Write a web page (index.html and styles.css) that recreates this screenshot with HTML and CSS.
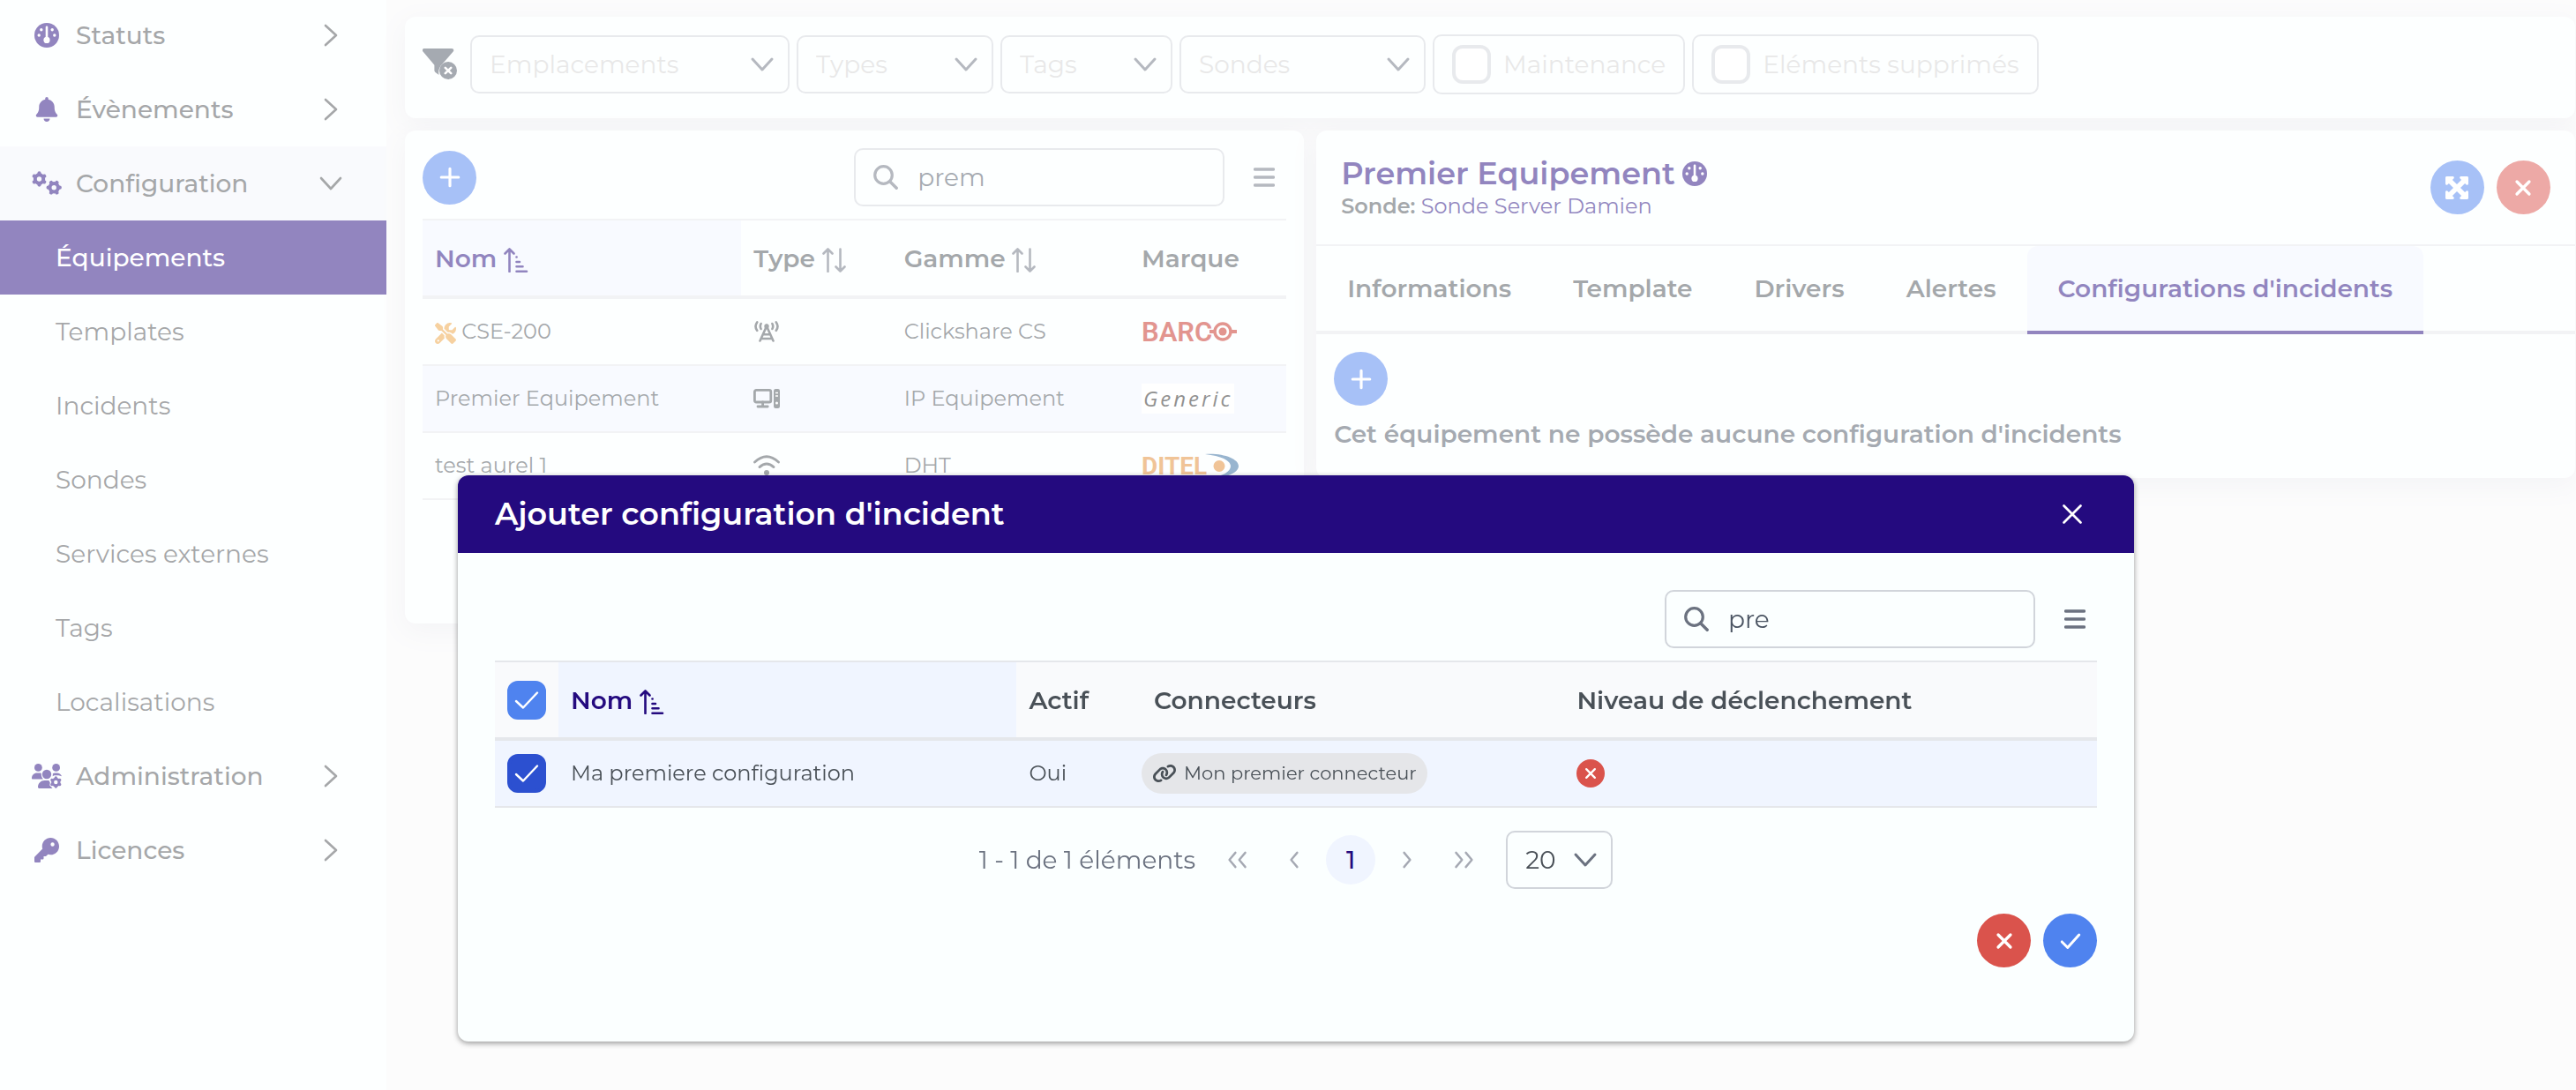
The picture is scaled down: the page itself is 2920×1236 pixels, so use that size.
FILE: index.html
```html
<!DOCTYPE html>
<html lang="fr">
<head>
    <meta charset="UTF-8">
    <meta name="viewport" content="width=device-width, initial-scale=1.0">
    <title>Équipements</title>
    <link rel="stylesheet" href="styles.css">
</head>
<body>

    <!-- Icônes -->
    <svg class="sprite" aria-hidden="true">
        <symbol id="i-gauge" viewBox="0 0 28 28">
            <circle cx="14" cy="14" r="14" fill="currentColor"/>
            <g fill="#fff">
                <circle cx="7.8" cy="7.8" r="1.7"/><circle cx="20.2" cy="7.8" r="1.7"/>
                <circle cx="5.2" cy="14" r="1.7"/><circle cx="22.8" cy="14" r="1.7"/>
                <circle cx="14" cy="19.4" r="3.6"/>
                <rect x="12.7" y="3.5" width="2.6" height="15" rx="1.3"/>
            </g>
        </symbol>
        <symbol id="i-bell" viewBox="0 0 448 512"><path fill="currentColor" d="M224 0c-17.700 0-32 14.300-32 32V51.200C119 66 64 130.600 64 208v18.800c0 47-17.300 92.400-48.500 127.600l-7.400 8.300c-8.400 9.400-10.400 22.900-5.300 34.400S19.400 416 32 416H416c12.600 0 24-7.400 29.200-18.900s3.100-25-5.300-34.400l-7.400-8.300C401.300 319.200 384 273.900 384 226.800V208c0-77.400-55-142-128-156.800V32c0-17.700-14.300-32-32-32zm45.300 493.300c12-12 18.700-28.300 18.700-45.300H224 160c0 17 6.700 33.300 18.700 45.300s28.300 18.700 45.300 18.700s33.300-6.700 45.300-18.700z"/></symbol>
        <symbol id="i-gears" viewBox="0 0 34 28">
            <g fill="none" stroke="currentColor">
                <g transform="translate(8.500 9)">
                    <circle r="4.700" stroke-width="4"/>
                    <path stroke-width="4.200" stroke-linecap="round" d="M0-5.500V-6.600M0 5.500V6.600M4.800-2.800L5.700-3.300M-4.800-2.800L-5.700-3.300M4.800 2.800L5.700 3.300M-4.800 2.800L-5.700 3.300"/>
                </g>
                <g transform="translate(25.200 18.700) rotate(90)">
                    <circle r="4.700" stroke-width="4"/>
                    <path stroke-width="4.200" stroke-linecap="round" d="M0-5.500V-6.600M0 5.500V6.600M4.800-2.800L5.700-3.300M-4.800-2.800L-5.700-3.300M4.800 2.800L5.700 3.300M-4.800 2.800L-5.700 3.300"/>
                </g>
            </g>
        </symbol>
        <symbol id="i-users" viewBox="0 0 34 28">
            <g fill="currentColor">
                <circle cx="7.400" cy="4.400" r="4.400"/><circle cx="27.600" cy="4.400" r="4.400"/>
                <circle cx="17" cy="12" r="5.200"/>
                <path d="M0 16.400C0 13 2.600 10.500 6 10.500H8.800C9.500 10.500 10.200 10.600 10.800 10.900C10.600 13.300 11.200 15.600 12.900 17.500H1.200C.5 17.500 0 17.100 0 16.400Z"/>
                <path d="M23.800 11.300C24.600 10.800 25.600 10.500 26.500 10.500H28.500C31 10.500 33.200 12 34 14.300L30.500 13.200H25.500L23.600 14.300C23.900 13.300 24 12.300 23.800 11.300Z"/>
                <path d="M7 26.600C7 22.300 10.300 19 14.500 19H19.400L20.800 21.500L20.300 24.500L23.500 27.900H8.300C7.600 27.900 7 27.300 7 26.600Z"/>
            </g>
            <g transform="translate(27.300 21)" fill="none" stroke="currentColor">
                <circle r="3.700" stroke-width="3"/>
                <path stroke-width="3.400" stroke-linecap="round" d="M0-4.500V-5M0 4.500V5M4-2.300L4.400-2.500M-4-2.300L-4.400-2.500M4 2.300L4.400 2.500M-4 2.300L-4.400 2.500"/>
            </g>
        </symbol>
        <symbol id="i-key" viewBox="0 0 512 512"><path fill="currentColor" d="M336 352c97.200 0 176-78.800 176-176S433.200 0 336 0S160 78.800 160 176c0 18.700 2.900 36.800 8.300 53.700L7 391c-4.500 4.500-7 10.600-7 17v80c0 13.300 10.700 24 24 24h80c13.300 0 24-10.700 24-24V448h40c13.300 0 24-10.700 24-24V384h40c6.400 0 12.500-2.500 17-7l33.300-33.300c16.900 5.400 35 8.300 53.700 8.300zM376 96a40 40 0 1 1 0 80 40 40 0 1 1 0-80z"/></symbol>
        <symbol id="i-right" viewBox="0 0 28 28"><path d="M8 3L20 14L8 25" fill="none" stroke="currentColor" stroke-width="2.600" stroke-linecap="round" stroke-linejoin="round"/></symbol>
        <symbol id="i-down" viewBox="0 0 28 28"><path d="M3 8L14 20L25 8" fill="none" stroke="currentColor" stroke-width="2.600" stroke-linecap="round" stroke-linejoin="round"/></symbol>
        <symbol id="i-filter" viewBox="0 0 40 36">
            <path fill="currentColor" d="M2 0H33C35 0 36 2 34.700 3.600L22.500 17.500C19 20.500 17.500 25 18.500 30L14.500 27C13.800 26.500 13.400 25.800 13.400 25V18.800L.5 3.600C-.8 2 0 0 2 0Z"/>
            <circle cx="29" cy="25" r="10" fill="currentColor"/>
            <path d="M25.800 21.800L32.200 28.200M32.200 21.800L25.800 28.200" stroke="#fff" stroke-width="2.600" stroke-linecap="round"/>
        </symbol>
        <symbol id="i-plus" viewBox="0 0 28 28"><path d="M14 3.500V24.500M3.500 14H24.500" stroke="currentColor" stroke-width="3.400" stroke-linecap="round"/></symbol>
        <symbol id="i-cross" viewBox="0 0 28 28"><path d="M6.500 6.500L21.500 21.500M21.500 6.500L6.500 21.500" stroke="currentColor" stroke-width="3.600" stroke-linecap="round"/></symbol>
        <symbol id="i-close" viewBox="0 0 28 28"><path d="M4.500 4.500L23.500 23.500M23.500 4.500L4.500 23.500" stroke="currentColor" stroke-width="2.700" stroke-linecap="round"/></symbol>
        <symbol id="i-check" viewBox="0 0 28 28"><path d="M3.500 15L10.500 22L24.500 6.500" fill="none" stroke="currentColor" stroke-width="3.200" stroke-linecap="round" stroke-linejoin="round"/></symbol>
        <symbol id="i-search" viewBox="0 0 28 28"><circle cx="11.500" cy="11.500" r="9.800" fill="none" stroke="currentColor" stroke-width="3.200"/><path d="M18.700 18.700L26.200 26.200" stroke="currentColor" stroke-width="3.400" stroke-linecap="round"/></symbol>
        <symbol id="i-menu" viewBox="0 0 24 22"><path d="M1.500 2H22.500M1.500 11H22.500M1.500 20H22.500" stroke="currentColor" stroke-width="3.400" stroke-linecap="round"/></symbol>
        <symbol id="i-asc" viewBox="0 0 28 28"><g fill="none" stroke="currentColor" stroke-width="2.600" stroke-linecap="round" stroke-linejoin="round"><path d="M6.500 27V1.500M1.500 6.500L6.500 1.500L11.500 6.500"/><path d="M14.500 10.500H14.600M14.500 16H18M14.500 21.300H21.500M14.500 26.700H26"/></g></symbol>
        <symbol id="i-sort" viewBox="0 0 28 28"><g fill="none" stroke="currentColor" stroke-width="2.600" stroke-linecap="round" stroke-linejoin="round"><path d="M6.500 27V1.500M1.500 6.500L6.500 1.500L11.500 6.500"/><path d="M20.500 1.500V26.500M15.500 21.500L20.500 26.500L25.500 21.500"/></g></symbol>
        <symbol id="i-tools" viewBox="0 0 512 512"><path fill="currentColor" d="M78.600 5C69.100-2.400 55.600-1.500 47 7L7 47c-8.500 8.500-9.400 22-2.100 31.600l80 104c4.500 5.900 11.600 9.400 19 9.400h54.100l109 109c-14.700 29-10 65.400 14.300 89.600l112 112c12.500 12.500 32.800 12.500 45.300 0l64-64c12.500-12.500 12.500-32.800 0-45.300l-112-112c-24.200-24.200-60.600-29-89.600-14.300l-109-109V104c0-7.500-3.500-14.500-9.400-19L78.600 5zM19.900 396.100C7.200 408.800 0 426.100 0 444.100C0 481.600 30.400 512 67.900 512c18 0 35.300-7.200 48-19.900L233.700 374.300c-7.800-20.900-9-43.600-3.600-65.100l-61.700-61.700L19.900 396.100zM512 144c0-10.500-1.100-20.700-3.200-30.500c-2.400-11.200-16.100-14.100-24.200-6l-63.900 63.900c-3 3-7.100 4.700-11.300 4.700H352c-8.800 0-16-7.200-16-16V102.600c0-4.200 1.700-8.300 4.700-11.300l63.900-63.900c8.100-8.100 5.200-21.800-6-24.200C388.700 1.100 378.500 0 368 0C288.500 0 224 64.500 224 144l0 .8 85.300 85.300c36-9.100 75.800 .5 104 28.700L429 274.500c49-23 83-72.800 83-130.500zM56 432a24 24 0 1 1 48 0 24 24 0 1 1 -48 0z"/></symbol>
        <symbol id="i-tower" viewBox="0 0 28 24"><g fill="none" stroke="currentColor" stroke-width="2.600" stroke-linecap="round"><path d="M6.500 22.500L14 6L21.500 22.500M10.500 15.200H17.500M8.500 20H19.500"/><path d="M3.200 1.400Q-.2 6 3.200 10.800M7.600 3Q6 6 7.600 9M24.800 1.400Q28.200 6 24.800 10.800M20.400 3Q22 6 20.400 9"/></g><circle cx="14" cy="6" r="2.700" fill="currentColor"/></symbol>
        <symbol id="i-computer" viewBox="0 0 30 22"><g fill="none" stroke="currentColor" stroke-width="2.800"><rect x="1.400" y="1.400" width="18.400" height="13.600" rx="1.800"/><path d="M10.600 15V19.500M5 20H16.200" stroke-linecap="round"/></g><rect x="23" y="0" width="7" height="22" rx="2.200" fill="currentColor"/><path d="M25 4.500H28M25 8H28" stroke="#fff" stroke-width="1.300"/><circle cx="26.500" cy="16" r="1.500" fill="#fff"/></symbol>
        <symbol id="i-wifi" viewBox="0 0 30 24"><g fill="none" stroke="currentColor" stroke-width="2.800" stroke-linecap="round"><path d="M1.500 8Q15-4.500 28.500 8M7 13.600Q15 6.500 23 13.600"/></g><circle cx="15" cy="20" r="3" fill="currentColor"/></symbol>
        <symbol id="i-expand" viewBox="0 0 26 26"><path fill="currentColor" d="M1.500 0H8.300C9.700 0 10.300 1.500 9.300 2.500L7.900 3.900L13 9L18.100 3.900L16.700 2.500C15.700 1.500 16.300 0 17.700 0H24.500C25.400 0 26 .6 26 1.500V8.300C26 9.700 24.500 10.300 23.500 9.300L22.100 7.900L17 13L22.100 18.100L23.500 16.700C24.500 15.700 26 16.300 26 17.700V24.500C26 25.400 25.400 26 24.500 26H17.700C16.300 26 15.700 24.500 16.700 23.500L18.100 22.100L13 17L7.900 22.100L9.300 23.500C10.300 24.500 9.700 26 8.300 26H1.500C.6 26 0 25.400 0 24.500V17.700C0 16.300 1.500 15.700 2.500 16.700L3.900 18.100L9 13L3.900 7.900L2.500 9.300C1.500 10.300 0 9.700 0 8.300V1.500C0 .6 .6 0 1.500 0Z"/></symbol>
        <symbol id="i-link" viewBox="0 0 640 512"><path fill="currentColor" d="M579.800 267.700c56.500-56.500 56.500-148 0-204.500c-50-50-128.800-56.500-186.300-15.400l-1.600 1.100c-14.400 10.300-17.700 30.300-7.400 44.600s30.300 17.700 44.600 7.400l1.600-1.100c32.100-22.900 76-19.300 103.800 8.600c31.500 31.500 31.500 82.500 0 114L422.300 334.800c-31.500 31.500-82.500 31.500-114 0c-27.900-27.900-31.500-71.800-8.600-103.800l1.100-1.600c10.300-14.400 6.900-34.400-7.400-44.600s-34.400-6.900-44.600 7.400l-1.100 1.600C206.500 251.200 213 330 263 380c56.500 56.500 148 56.500 204.500 0L579.800 267.700zM60.200 244.300c-56.500 56.500-56.500 148 0 204.500c50 50 128.800 56.500 186.300 15.400l1.600-1.100c14.400-10.300 17.700-30.300 7.400-44.600s-30.300-17.700-44.600-7.400l-1.600 1.100c-32.100 22.900-76 19.300-103.800-8.600C74 372 74 321 105.500 289.500L217.700 177.200c31.500-31.500 82.500-31.500 114 0c27.900 27.900 31.500 71.800 8.600 103.900l-1.100 1.600c-10.300 14.400-6.900 34.400 7.400 44.600s34.400 6.900 44.600-7.400l1.100-1.600C433.500 260.800 427 182 377 132c-56.500-56.500-148-56.500-204.500 0L60.200 244.300z"/></symbol>
        <symbol id="i-prev" viewBox="0 0 28 28"><path d="M18 4.500L10 14L18 23.500" fill="none" stroke="currentColor" stroke-width="2.800" stroke-linecap="round" stroke-linejoin="round"/></symbol>
        <symbol id="i-next" viewBox="0 0 28 28"><path d="M10 4.500L18 14L10 23.500" fill="none" stroke="currentColor" stroke-width="2.800" stroke-linecap="round" stroke-linejoin="round"/></symbol>
        <symbol id="i-first" viewBox="0 0 28 28"><path d="M11 4.500L3 14L11 23.500M24 4.500L16 14L24 23.500" fill="none" stroke="currentColor" stroke-width="2.800" stroke-linecap="round" stroke-linejoin="round"/></symbol>
        <symbol id="i-last" viewBox="0 0 28 28"><path d="M4 4.500L12 14L4 23.500M17 4.500L25 14L17 23.500" fill="none" stroke="currentColor" stroke-width="2.800" stroke-linecap="round" stroke-linejoin="round"/></symbol>
    </svg>

    <div class="layout">
        <aside class="sidebar">
            <nav>
                <ul class="menu">
                    <li><a href="#"><svg class="menu-icon"><use href="#i-gauge"/></svg><span>Statuts</span><svg class="icon"><use href="#i-right"/></svg></a></li>
                    <li><a href="#"><svg class="menu-icon"><use href="#i-bell"/></svg><span>Évènements</span><svg class="icon"><use href="#i-right"/></svg></a></li>
                    <li>
                        <a href="#" class="open"><svg class="menu-icon"><use href="#i-gears"/></svg><span>Configuration</span><svg class="icon"><use href="#i-down"/></svg></a>
                        <ul class="submenu">
                            <li><a href="#" class="active">Équipements</a></li>
                            <li><a href="#">Templates</a></li>
                            <li><a href="#">Incidents</a></li>
                            <li><a href="#">Sondes</a></li>
                            <li><a href="#">Services externes</a></li>
                            <li><a href="#">Tags</a></li>
                            <li><a href="#">Localisations</a></li>
                        </ul>
                    </li>
                    <li><a href="#"><svg class="menu-icon"><use href="#i-users"/></svg><span>Administration</span><svg class="icon"><use href="#i-right"/></svg></a></li>
                    <li><a href="#"><svg class="menu-icon"><use href="#i-key"/></svg><span>Licences</span><svg class="icon"><use href="#i-right"/></svg></a></li>
                </ul>
            </nav>
        </aside>

        <main class="content">
            <section class="card filters">
                <button class="filter-clear" aria-label="Effacer les filtres"><svg><use href="#i-filter"/></svg></button>
                <select class="select w-lg" aria-label="Emplacements"><option>Emplacements</option></select>
                <select class="select w-sm" aria-label="Types"><option>Types</option></select>
                <select class="select w-xs" aria-label="Tags"><option>Tags</option></select>
                <select class="select w-md" aria-label="Sondes"><option>Sondes</option></select>
                <label class="check-filter"><input type="checkbox" class="checkbox">Maintenance</label>
                <label class="check-filter"><input type="checkbox" class="checkbox">Eléments supprimés</label>
            </section>

            <div class="panels">
                <section class="card list">
                    <div class="toolbar">
                        <button class="round blue" aria-label="Ajouter un équipement"><svg class="icon-sm"><use href="#i-plus"/></svg></button>
                        <div class="tools">
                            <label class="search"><svg class="icon"><use href="#i-search"/></svg><input type="text" value="prem" aria-label="Rechercher"></label>
                            <button class="menu-btn" aria-label="Options"><svg><use href="#i-menu"/></svg></button>
                        </div>
                    </div>
                    <table class="table">
                        <colgroup><col class="c-nom"><col class="c-type"><col class="c-gamme"><col></colgroup>
                        <thead>
                            <tr>
                                <th class="sorted">Nom <svg class="icon"><use href="#i-asc"/></svg></th>
                                <th>Type <svg class="icon sort"><use href="#i-sort"/></svg></th>
                                <th>Gamme <svg class="icon sort"><use href="#i-sort"/></svg></th>
                                <th>Marque</th>
                            </tr>
                        </thead>
                        <tbody>
                            <tr>
                                <td><svg class="tools-icon"><use href="#i-tools"/></svg> CSE-200</td>
                                <td><svg class="type-icon"><use href="#i-tower"/></svg></td>
                                <td>Clickshare CS</td>
                                <td>
                                    <svg class="logo" viewBox="0 0 110 28">
                                        <text class="barco" x="0" y="25">BARC</text>
                                        <g fill="none" stroke="#c42b1f"><circle cx="92" cy="14" r="9" stroke-width="3.500"/><path d="M77 14H83M101 14H108" stroke-width="4"/></g>
                                        <circle cx="92" cy="14" r="4.500" fill="#c42b1f"/>
                                    </svg>
                                </td>
                            </tr>
                            <tr class="selected">
                                <td>Premier Equipement</td>
                                <td><svg class="type-icon"><use href="#i-computer"/></svg></td>
                                <td>IP Equipement</td>
                                <td><span class="generic">Generic</span></td>
                            </tr>
                            <tr>
                                <td>test aurel 1</td>
                                <td><svg class="type-icon"><use href="#i-wifi"/></svg></td>
                                <td>DHT</td>
                                <td>
                                    <svg class="logo" viewBox="0 0 110 28">
                                        <text class="ditel" x="0" y="24">DITEL</text>
                                        <circle cx="88" cy="14.500" r="6.500" fill="#e0892f"/>
                                        <path fill="#316b9f" d="M72 1C92-.5 110 6 110 14.500C110 23 92 29 77 28C92 26 101 21 101 14.500C101 8 90 3 72 1Z"/>
                                    </svg>
                                </td>
                            </tr>
                        </tbody>
                    </table>
                </section>

                <section class="card detail">
                    <header class="detail-header">
                        <div>
                            <h2>Premier Equipement<svg class="icon"><use href="#i-gauge"/></svg></h2>
                            <p><strong>Sonde:</strong> <a href="#">Sonde Server Damien</a></p>
                        </div>
                        <div class="actions">
                            <button class="round blue" aria-label="Agrandir"><svg class="icon-sm"><use href="#i-expand"/></svg></button>
                            <button class="round red" aria-label="Fermer"><svg class="icon-sm"><use href="#i-cross"/></svg></button>
                        </div>
                    </header>
                    <nav class="tabs">
                        <button>Informations</button>
                        <button>Template</button>
                        <button>Drivers</button>
                        <button>Alertes</button>
                        <button class="active">Configurations d'incidents</button>
                    </nav>
                    <div class="detail-body">
                        <button class="round blue" aria-label="Ajouter une configuration"><svg class="icon-sm"><use href="#i-plus"/></svg></button>
                        <p>Cet équipement ne possède aucune configuration d'incidents</p>
                    </div>
                </section>
            </div>
        </main>
    </div>

    <div class="mask"></div>

    <div class="dialog" role="dialog" aria-labelledby="dialogTitle">
        <header class="dialog-header">
            <h2 id="dialogTitle">Ajouter configuration d'incident</h2>
            <button aria-label="Fermer la fenêtre"><svg class="icon"><use href="#i-close"/></svg></button>
        </header>
        <div class="dialog-body">
            <div class="toolbar">
                <div class="tools">
                    <label class="search"><svg class="icon"><use href="#i-search"/></svg><input type="text" value="pre" aria-label="Rechercher une configuration"></label>
                    <button class="menu-btn" aria-label="Options"><svg><use href="#i-menu"/></svg></button>
                </div>
            </div>
            <table class="table">
                <colgroup><col class="d-check"><col class="d-nom"><col class="d-actif"><col class="d-conn"><col></colgroup>
                <thead>
                    <tr>
                        <th><input type="checkbox" class="checkbox" aria-label="Tout sélectionner" checked></th>
                        <th class="sorted">Nom <svg class="icon"><use href="#i-asc"/></svg></th>
                        <th>Actif</th>
                        <th>Connecteurs</th>
                        <th>Niveau de déclenchement</th>
                    </tr>
                </thead>
                <tbody>
                    <tr class="selected">
                        <td><input type="checkbox" class="checkbox hover" aria-label="Sélectionner Ma premiere configuration" checked></td>
                        <td>Ma premiere configuration</td>
                        <td>Oui</td>
                        <td class="chip-cell"><span class="chip"><svg><use href="#i-link"/></svg>Mon premier connecteur</span></td>
                        <td><span class="level"><svg><use href="#i-cross"/></svg></span></td>
                    </tr>
                </tbody>
            </table>
            <div class="paginator">
                <span class="count">1 - 1 de 1 éléments</span>
                <div class="pages">
                    <button aria-label="Première page"><svg><use href="#i-first"/></svg></button>
                    <button aria-label="Page précédente"><svg><use href="#i-prev"/></svg></button>
                    <button class="current">1</button>
                    <button aria-label="Page suivante"><svg><use href="#i-next"/></svg></button>
                    <button aria-label="Dernière page"><svg><use href="#i-last"/></svg></button>
                </div>
                <select class="select rows" aria-label="Lignes par page"><option>20</option></select>
            </div>
            <div class="actions">
                <button class="round red" aria-label="Annuler"><svg class="icon-sm"><use href="#i-cross"/></svg></button>
                <button class="round blue" aria-label="Valider"><svg class="icon-sm"><use href="#i-check"/></svg></button>
            </div>
        </div>
    </div>

</body>
</html>
```
FILE: styles.css
```css
* {
    box-sizing: border-box;
}
body {
    font-family: 'Montserrat', 'Inter', sans-serif;
    font-size: 28px;
    line-height: 34px;
    margin: 0;
    background-color: #f8f8f9;
    color: #495057;
}
h2, p, ul {
    margin: 0;
    padding: 0;
}
ul {
    list-style: none;
}
a {
    color: inherit;
    text-decoration: none;
}
button, input, select {
    font: inherit;
    color: inherit;
}
button {
    display: flex;
    align-items: center;
    justify-content: center;
    padding: 0;
    border: none;
    background: none;
    cursor: pointer;
}
.sprite {
    display: none;
}
.icon {
    width: 28px;
    height: 28px;
}
.icon-sm {
    width: 26px;
    height: 26px;
}
.layout {
    display: flex;
    min-height: 100vh;
}

/* Menu */
.sidebar {
    width: 438px;
    flex-shrink: 0;
    background-color: #fbfefe;
    overflow: hidden;
}
.menu {
    margin-top: -2px;
    font-weight: 500;
    color: #4b4e52;
}
.menu a {
    display: flex;
    align-items: center;
    height: 84px;
    padding: 0 49px 0 36px;
}
.menu a span {
    flex: 1;
    margin-left: 16px;
}
.menu a.open {
    background-color: #f3f5fa;
}
.menu-icon {
    width: 34px;
    height: 28px;
    color: #240a7f;
}
.menu .submenu a {
    padding-left: 63px;
    font-weight: 400;
}
.menu .submenu a.active {
    background-color: #240a7f;
    color: #fff;
    font-weight: 500;
}

/* Contenu */
.content {
    flex: 1;
    min-width: 0;
    padding: 19px 1px 0 21px;
}
.card {
    background-color: #fbfefe;
    border-radius: 12px;
    box-shadow: 0 8px 30px rgba(41, 50, 85, 0.08);
}
.filters {
    display: flex;
    align-items: center;
    gap: 8px;
    padding: 20px 20px 27px;
    margin-bottom: 14px;
}
.filter-clear {
    margin-right: 6px;
    color: #4b5563;
}
.filter-clear svg {
    width: 40px;
    height: 36px;
}
.select {
    appearance: none;
    height: 66px;
    padding: 0 52px 0 20px;
    border: 2px solid #d1d5db;
    border-radius: 10px;
    color: #d1d1d1;
    background: url("data:image/svg+xml,%3Csvg xmlns='http://www.w3.org/2000/svg' viewBox='0 0 28 28'%3E%3Cpath d='M3 8L14 20L25 8' fill='none' stroke='%236b7280' stroke-width='3' stroke-linecap='round' stroke-linejoin='round'/%3E%3C/svg%3E") no-repeat right 15px center / 28px;
}
.w-lg {
    width: 362px;
}
.w-md {
    width: 279px;
}
.w-sm {
    width: 223px;
}
.w-xs {
    width: 195px;
}
.check-filter {
    display: flex;
    align-items: center;
    gap: 14px;
    height: 68px;
    padding: 0 20px;
    border: 2px solid #d1d5db;
    border-radius: 10px;
    color: #d1d1d1;
}
.checkbox {
    appearance: none;
    display: block;
    width: 44px;
    height: 44px;
    margin: 0;
    border: 4px solid #d1d5db;
    border-radius: 12px;
    background-color: #fff;
}
.checkbox:checked {
    border-color: #4f83ef;
    background: #4f83ef url("data:image/svg+xml,%3Csvg xmlns='http://www.w3.org/2000/svg' viewBox='0 0 28 28'%3E%3Cpath d='M2 15L10 22.500L26 5.500' fill='none' stroke='white' stroke-width='2.400' stroke-linecap='round' stroke-linejoin='round'/%3E%3C/svg%3E") no-repeat center / 28px;
}
.checkbox.hover:checked {
    border-color: #2c50d0;
    background-color: #2c50d0;
}
.panels {
    display: grid;
    grid-template-columns: 5fr 7fr;
    align-items: start;
    gap: 14px;
}
.list {
    padding: 20px 20px 140px;
}
.toolbar {
    display: flex;
    align-items: center;
    height: 80px;
    padding-bottom: 14px;
}
.tools {
    display: flex;
    align-items: center;
    gap: 33px;
    margin-left: auto;
    padding-right: 13px;
}
.search {
    display: flex;
    align-items: center;
    gap: 22px;
    width: 420px;
    height: 66px;
    padding: 0 20px;
    border: 2px solid #d1d5db;
    border-radius: 10px;
    color: #6b7280;
}
.search input {
    flex: 1;
    min-width: 0;
    padding: 0;
    border: none;
    outline: none;
    background: none;
    color: #4b5563;
}
.menu-btn {
    color: #6b7280;
}
.menu-btn svg {
    width: 24px;
    height: 22px;
}
.round {
    width: 61px;
    height: 61px;
    border-radius: 50%;
    color: #fff;
}
.blue {
    background-color: #4f83ef;
}
.red {
    background-color: #da534c;
}
.actions {
    display: flex;
    justify-content: flex-end;
    gap: 14px;
}

/* Tableaux */
.table {
    width: 100%;
    table-layout: fixed;
    border-collapse: separate;
    border-spacing: 0;
}
.table th {
    height: 91px;
    padding: 0 14px;
    text-align: left;
    font-weight: 600;
    border-top: 2px solid #e5e7eb;
    border-bottom: 4px solid #e5e7eb;
    background-color: #f9fafc;
}
.table th .icon {
    vertical-align: middle;
}
.table th .sort {
    color: #6b7280;
}
.table .sorted {
    color: #240a7f;
    background-color: #f0f5ff;
}
.table td {
    height: 76px;
    padding: 0 14px;
    font-size: 24px;
    border-bottom: 2px solid #e5e7eb;
}
.table .selected td {
    background-color: #f0f5ff;
}
.list th {
    background-color: #fbfefe;
}
.c-nom {
    width: 36.9%;
}
.c-type {
    width: 17.4%;
}
.c-gamme {
    width: 27.5%;
}
.d-check {
    width: 72px;
}
.d-nom {
    width: 28.6%;
}
.d-actif {
    width: 7.8%;
}
.d-conn {
    width: 26.4%;
}
.tools-icon {
    width: 24px;
    height: 24px;
    vertical-align: middle;
    color: #eda341;
}
.type-icon {
    display: block;
    width: 30px;
    height: 24px;
}
.logo {
    display: block;
    width: 110px;
    height: 28px;
    overflow: visible;
}
.barco {
    font-family: 'Roboto', sans-serif;
    font-size: 31px;
    font-weight: 600;
    fill: #c42b1f;
}
.ditel {
    font-family: 'Roboto', sans-serif;
    font-size: 28px;
    font-weight: 700;
    fill: #e0892f;
}
.generic {
    display: inline-block;
    padding: 0 2px;
    background-color: #fff;
    font-family: 'Open Sans', sans-serif;
    font-style: italic;
    letter-spacing: 3px;
    color: #222;
}

/* Détail */
.detail-header {
    display: flex;
    align-items: center;
    justify-content: space-between;
    height: 131px;
    padding: 0 28px;
    border-bottom: 2px solid #e5e7eb;
}
.detail-header h2 {
    display: flex;
    align-items: center;
    gap: 8px;
    font-size: 35px;
    font-weight: 600;
    line-height: 42px;
    color: #240a7f;
}
.detail-header p {
    font-size: 24px;
    line-height: 32px;
}
.detail-header strong {
    font-weight: 600;
}
.detail-header a {
    color: #240a7f;
}
.tabs {
    display: flex;
    border-bottom: 4px solid #e5e7eb;
}
.tabs button {
    height: 100px;
    margin-bottom: -4px;
    padding: 0 35px;
    border-bottom: 4px solid transparent;
    font-weight: 600;
}
.tabs .active {
    border-color: #240a7f;
    border-radius: 12px 12px 0 0;
    background-color: #f0f5ff;
    color: #240a7f;
}
.detail-body {
    padding: 20px 20px 33px;
    font-weight: 600;
    color: #4b5563;
}
.detail-body p {
    margin-top: 15px;
}

/* Fenêtre modale */
.mask {
    position: fixed;
    inset: 0;
    background-color: rgba(255, 255, 255, 0.5);
}
.dialog {
    position: absolute;
    top: 539px;
    left: 519px;
    right: 501px;
    border-radius: 12px;
    background-color: #fbffff;
    box-shadow: 0 2px 6px rgba(0, 0, 0, 0.4);
    overflow: hidden;
}
.dialog-header {
    display: flex;
    align-items: center;
    justify-content: space-between;
    height: 88px;
    padding: 0 56px 0 42px;
    background-color: #240a7f;
    color: #fff;
}
.dialog-header h2 {
    font-size: 35px;
    font-weight: 600;
}
.dialog-body {
    padding: 42px 42px 84px;
}
.chip-cell.chip-cell {
    padding: 0;
}
.chip {
    display: inline-flex;
    align-items: center;
    gap: 8px;
    height: 46px;
    padding: 0 12px;
    border-radius: 23px;
    background-color: #e5e6e9;
    font-size: 21px;
    vertical-align: middle;
}
.chip svg {
    width: 28px;
    height: 22px;
}
.level {
    display: flex;
    align-items: center;
    justify-content: center;
    width: 32px;
    height: 32px;
    border-radius: 50%;
    background-color: #da534c;
    color: #fff;
}
.level svg {
    width: 18px;
    height: 18px;
    stroke-width: 5;
}
.paginator {
    display: flex;
    align-items: center;
    justify-content: center;
    gap: 20px;
    padding: 26px 0 28px;
    color: #6b7280;
}
.pages {
    display: flex;
    gap: 8px;
}
.pages button {
    width: 56px;
    height: 56px;
    border-radius: 50%;
    color: #a5a9b3;
}
.pages svg {
    width: 24px;
    height: 24px;
}
.pages .current {
    background-color: #f0f5ff;
    color: #240a7f;
    font-weight: 500;
}
.rows {
    width: 121px;
    color: #495057;
}
```
